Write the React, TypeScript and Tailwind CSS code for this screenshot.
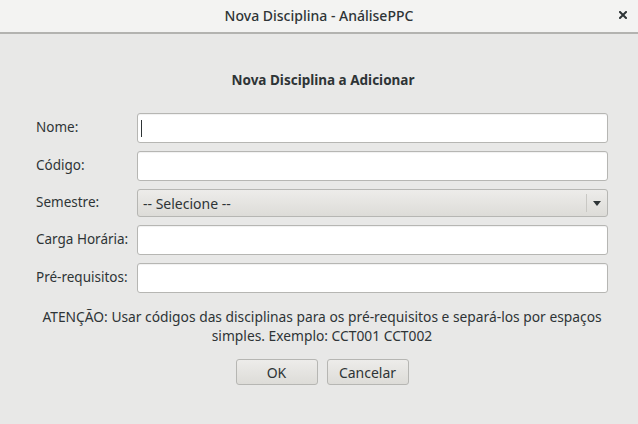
import React from "react";

const font = { fontFamily: '"Noto Sans", "Open Sans", sans-serif' };

function Field({ label, children }: { label: string; children: React.ReactNode }) {
  return (
    <div className="flex items-center">
      <div className="w-[101px] shrink-0 text-[13.5px] text-[#2e3436] -mt-[1px]">{label}</div>
      <div className="flex-1">{children}</div>
    </div>
  );
}

function TextInput({ focused = false }: { focused?: boolean }) {
  return (
    <div className="h-[30px] rounded-[3px] border border-[#b6b6b3] bg-white shadow-[inset_0_1px_1px_rgba(0,0,0,0.06)] flex items-center pl-[3px]">
      {focused && <div className="w-px h-[17px] bg-[#2e3436]" />}
    </div>
  );
}

export default function App() {
  return (
    <div className="w-[638px] h-[424px] bg-[#e8e8e7] flex flex-col overflow-hidden" style={font}>
      <div className="h-[34px] shrink-0 bg-[#f3f3f2] border-b-2 border-[#b3b3b0] relative flex items-center justify-center">
        <span className="text-[14px] font-medium text-[#2e3436] -mt-[1px]">Nova Disciplina - AnálisePPC</span>
        <svg className="absolute left-[619px] top-[11px]" width="8" height="8" viewBox="0 0 8 8">
          <path d="M1 1 L7 7 M7 1 L1 7" stroke="#2e3436" strokeWidth="2" strokeLinecap="square" />
        </svg>
      </div>
      <div className="flex-1 flex flex-col pl-[36px] pr-[30px]">
        <div className="mt-[36px] h-[20px] flex items-center justify-center text-[13.5px] font-bold text-[#2e3436] pl-[2px]">
          Nova Disciplina a Adicionar
        </div>
        <div className="mt-[23px] flex flex-col gap-[8px]">
          <Field label="Nome:">
            <TextInput focused />
          </Field>
          <Field label="Código:">
            <TextInput />
          </Field>
          <Field label="Semestre:">
            <div className="h-[28px] rounded-[3px] border border-[#b6b6b3] bg-gradient-to-b from-[#edecea] to-[#dddcd8] flex items-center">
              <span className="flex-1 pl-[5px] text-[14px] text-[#2e3436]">-- Selecione --</span>
              <div className="w-px h-[18px] bg-[#c9c8c4]" />
              <div className="w-[20px] flex items-center justify-center">
                <svg width="8" height="5" viewBox="0 0 8 5">
                  <path d="M0 0 L8 0 L4 5 Z" fill="#2e3436" />
                </svg>
              </div>
            </div>
          </Field>
          <Field label="Carga Horária:">
            <TextInput />
          </Field>
          <Field label="Pré-requisitos:">
            <TextInput />
          </Field>
        </div>
        <div className="mt-[14px] text-center text-[13.8px] leading-[19px] text-[#2e3436]">
          ATENÇÃO: Usar códigos das disciplinas para os pré-requisitos e separá-los por espaços
          <br />
          simples. Exemplo: CCT001 CCT002
        </div>
        <div className="mt-[14px] flex justify-center gap-[9px]">
          <button className="w-[82px] h-[26px] rounded-[3px] border border-[#b6b6b3] bg-gradient-to-b from-[#edecea] to-[#dddcd8] text-[14px] text-[#2e3436]">
            OK
          </button>
          <button className="w-[82px] h-[26px] rounded-[3px] border border-[#b6b6b3] bg-gradient-to-b from-[#edecea] to-[#dddcd8] text-[14px] text-[#2e3436]">
            Cancelar
          </button>
        </div>
      </div>
    </div>
  );
}
